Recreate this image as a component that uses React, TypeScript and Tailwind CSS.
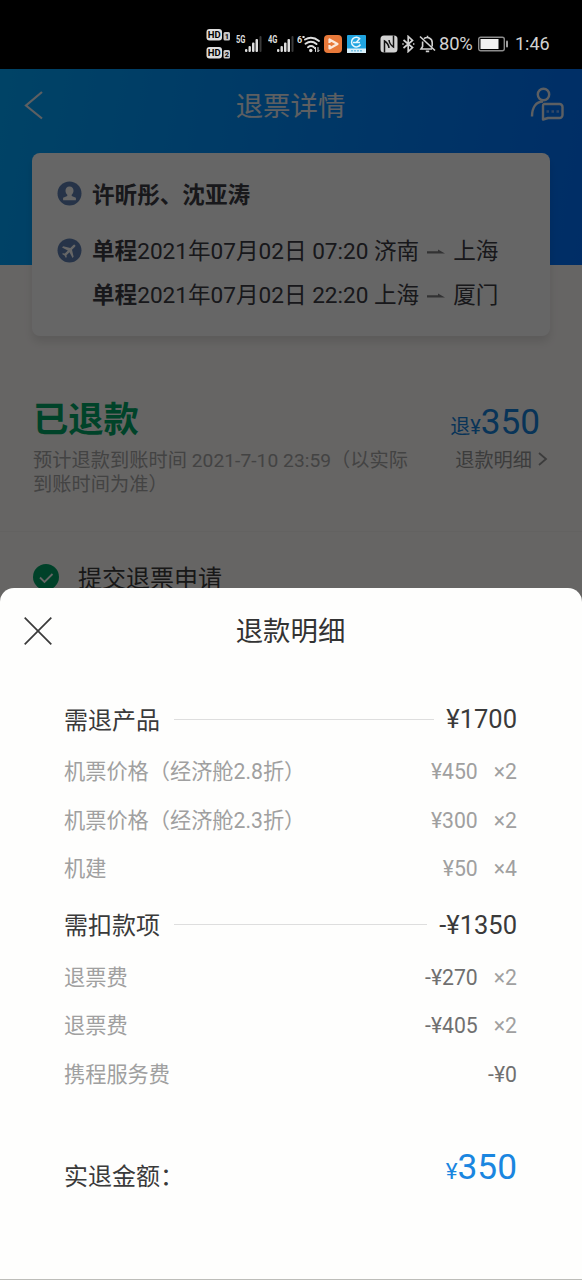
import React from "react";

interface FeeItem {
    label: string;
    price: string;
    count?: string;
}

interface FeeGroupProps {
    title: string;
    total: string;
    items: FeeItem[];
    deduct?: boolean;
    className?: string;
}

const refundItems: FeeItem[] = [
    { label: "机票价格（经济舱2.8折）", price: "¥450", count: "×2" },
    { label: "机票价格（经济舱2.3折）", price: "¥300", count: "×2" },
    { label: "机建", price: "¥50", count: "×4" },
];

const deductItems: FeeItem[] = [
    { label: "退票费", price: "-¥270", count: "×2" },
    { label: "退票费", price: "-¥405", count: "×2" },
    { label: "携程服务费", price: "-¥0" },
];

const trips = [
    { date: "2021年07月02日 07:20", from: "济南", to: "上海" },
    { date: "2021年07月02日 22:20", from: "上海", to: "厦门" },
];

function HdBadge({ sim }: { sim: string }) {
    return (
        <svg width="26" height="14" viewBox="0 0 26 14">
            <rect x="0.5" y="1" width="15.5" height="11.5" rx="3" fill="#dedede" />
            <text x="8.2" y="10.4" fontSize="9.5" fontWeight="700" textAnchor="middle" fill="#000">HD</text>
            <rect x="17.5" y="4" width="6.5" height="8.5" rx="1.5" fill="#c8c8c8" />
            <text x="20.8" y="11" fontSize="7.5" fontWeight="700" textAnchor="middle" fill="#000">{sim}</text>
        </svg>
    );
}

function Signal({ label }: { label: string }) {
    return (
        <svg width="28" height="20" viewBox="0 0 28 20">
            <text x="0" y="9" fontSize="10" fontWeight="700" textLength="9.5" lengthAdjust="spacingAndGlyphs" fill="#dedede">{label}</text>
            <g fill="#dedede">
                <rect x="9" y="15" width="2.4" height="3" rx="1" />
                <rect x="12.5" y="12" width="2.4" height="6" rx="1" />
                <rect x="16" y="8.5" width="2.5" height="9.5" rx="1" />
                <rect x="19.5" y="5" width="2.5" height="13" rx="1" />
            </g>
            <rect x="23.5" y="2" width="2" height="16" rx="1" fill="#3a3a3a" />
        </svg>
    );
}

function WifiIcon() {
    return (
        <svg width="24" height="20" viewBox="0 0 24 20" fill="none" stroke="#dedede" strokeWidth="2" strokeLinecap="round">
            <text x="0" y="9" fontSize="9" fontWeight="700" fill="#dedede" stroke="none">6</text>
            <path d="M6.2 3h.6M8 5.5q7-4 14 1.5M8.5 9.7q5.7-4 11 .3M11 13.2q3-2.2 6 0" />
            <circle cx="13.8" cy="16.5" r="1.7" fill="#dedede" stroke="none" />
            <path d="M18.5 13.5v4M17.3 14.7l1.2-1.2M21 17.5v-4M21 17.5l1.3-1.3" strokeWidth="1" />
        </svg>
    );
}

function StatusBar() {
    return (
        <div className="flex h-[69px] items-center bg-black pt-[18px] pl-[206px] text-[#d2d2d2]">
            <div className="flex flex-col gap-1">
                <HdBadge sim="1" />
                <HdBadge sim="2" />
            </div>
            <div className="ml-1 flex items-center">
                <Signal label="5G" />
                <div className="ml-1 flex"><Signal label="4G" /></div>
                <div className="ml-px flex"><WifiIcon /></div>
            </div>
            <svg className="ml-[3px]" width="18" height="18" viewBox="0 0 18 18">
                <rect width="18" height="18" rx="4" fill="#e8793a" />
                <path d="M5.5 4.5v9l8-4.5z" fill="none" stroke="#fbe8dc" strokeWidth="2.2" strokeLinejoin="round" />
                <path d="M3 9h5" stroke="#e8793a" strokeWidth="2" />
            </svg>
            <svg className="ml-[5px]" width="19" height="18" viewBox="0 0 19 18">
                <rect width="19" height="18" rx="1" fill="#20a4e0" />
                <path d="M6 7.5h7M13.2 4.2A4.8 4.8 0 1 0 13.5 9.5M9.5 7.2L13 3" fill="none" stroke="#e6f6fd" strokeWidth="1.5" />
                <rect y="13.5" width="19" height="4.5" fill="#d9f0fb" />
                <path d="M4 15.7h11" stroke="#79c4e6" strokeWidth="1.4" strokeDasharray="2 1" />
            </svg>
            <svg className="ml-[14px]" width="18" height="18" viewBox="0 0 18 18">
                <rect x="0.5" y="0.5" width="17" height="17" rx="3.5" fill="#d2d2d2" />
                <path d="M4.5 17.5V6q4 2.500 4.500 7M13.5 .5V12Q9.500 9.500 9 5" fill="none" stroke="#111" strokeWidth="1.5" />
            </svg>
            <svg className="ml-1" width="13" height="18" viewBox="0 0 13 18" fill="none" stroke="currentColor" strokeWidth="1.7">
                <path d="M1.5 5l9 7.5-4.3 4V1.5l4.3 4-9 7.5" />
                <path d="M0.3 9h1.4M11 9h1.4" />
            </svg>
            <svg className="ml-1" width="17" height="18" viewBox="0 0 17 18" fill="none" stroke="currentColor" strokeWidth="1.6">
                <path d="M1 1.5l15 14M5 3.7A5 5 0 0 1 13.2 7.5v4M3.6 6.5v5L2 14h11M6.8 16.4h3.4M8.5 2.3V.8" />
            </svg>
            <span className="ml-[3px] w-[36px] text-[18.4px] tracking-[-0.2px]">80%</span>
            <svg className="ml-[3px] shrink-0" width="31" height="16" viewBox="0 0 31 16">
                <rect x="0.7" y="1.2" width="25.6" height="13.6" rx="2" fill="none" stroke="#8c8c8c" strokeWidth="1.4" />
                <rect x="2.5" y="3" width="18" height="10" fill="#f0f0f0" />
                <rect x="28" y="4.5" width="2" height="7" rx="1" fill="#a0a0a0" />
            </svg>
            <span className="ml-[6px] text-[18px]">1:46</span>
        </div>
    );
}

function HalfArrow() {
    return (
        <svg className="mx-2" width="18" height="10" viewBox="0 0 18 10">
            <path d="M0 4.2h11V2.6l7 4H0z" fill="#7d7d80" />
        </svg>
    );
}

function TripCard() {
    return (
        <div className="mx-8 h-[183px] rounded-lg bg-white pt-[25px] pl-[25px] text-[22.6px] leading-[34px] text-[#3c3c44] shadow-[0_6px_8px_rgba(0,0,0,0.1)]">
            <div className="flex items-center">
                <svg className="-mt-1" width="25" height="25" viewBox="0 0 25 25">
                    <circle cx="12.5" cy="12.5" r="12" fill="#5f80b4" />
                    <path d="M12.5 5.5c-2.6 0-4 1.8-4 4.2 0 1.8.8 3 1.8 4v1.2l-4.2 1.8v2.5h12.8v-2.5l-4.2-1.8v-1.2c1-1 1.8-2.2 1.8-4 0-2.4-1.4-4.2-4-4.2z" fill="#fff" />
                </svg>
                <span className="ml-2.5 pt-px font-bold">许昕彤、沈亚涛</span>
            </div>
            <div className="mt-[22px] flex">
                <svg className="mt-[3px] shrink-0" width="25" height="25" viewBox="0 0 25 25">
                    <circle cx="12.5" cy="12.5" r="12" fill="#5f80b4" />
                    <path transform="translate(12.5 12.5) rotate(45) scale(.78) translate(-11.5 -12)" d="M21 16v-2l-8-5V3.5a1.5 1.5 0 0 0-3 0V9l-8 5v2l8-2.5V19l-2 1.5V22l3.5-1 3.5 1v-1.5L13 19v-5.5z" fill="#fff" />
                </svg>
                <div className="ml-2.5 flex flex-col gap-2.5">
                    {trips.map((trip) => (
                        <div key={trip.date} className="flex items-center whitespace-pre">
                            <span className="font-bold">单程</span>
                            <span>{trip.date} {trip.from}</span>
                            <HalfArrow />
                            <span>{trip.to}</span>
                        </div>
                    ))}
                </div>
            </div>
        </div>
    );
}

function RefundPage() {
    return (
        <div className="h-[1211px] bg-[#fffcfa]">
            <div className="h-[196px] bg-linear-[100deg] from-[#00a8ff] via-[#008cff] to-[#0072ff]">
                <div className="grid h-[84px] grid-cols-[1fr_auto_1fr] items-center pr-[18px] pb-3 pl-6">
                    <svg width="20" height="30" viewBox="0 0 20 30" fill="none" stroke="#e8eef5" strokeWidth="2.2">
                        <path d="M18 2L2 15.5 18 28.5" />
                    </svg>
                    <h1 className="pt-1.5 pr-[7px] text-[27.4px] text-[#e8eef5]">退票详情</h1>
                    <svg className="justify-self-end" width="34" height="36" viewBox="0 0 34 36" fill="none" stroke="#e8eef5" strokeWidth="2.4">
                        <circle cx="13.5" cy="7.5" r="5.7" />
                        <path d="M2 29.5C2 20.5 6 14.5 13 14.5" />
                        <path d="M14 17h15.5a3 3 0 0 1 3 3v8a3 3 0 0 1-3 3H18l-5 1.5V19a2 2 0 0 1 1-2z" strokeLinejoin="round" />
                        <path d="M16.5 24.5h2.5M21.5 24.5h2.5M26.5 24.5h2.5" stroke="#7fb4ff" />
                    </svg>
                </div>
                <TripCard />
            </div>
            <div className="flex h-[267px] justify-between border-b border-[#f8f5f3] pt-[133px] pr-[34px] pl-[33px]">
                <div className="w-[385px]">
                    <h2 className="text-[35.3px] leading-[44px] font-bold text-[#00a868]">已退款</h2>
                    <p className="mt-[7px] text-[19.2px] leading-6 tracking-[0.05px] text-[#a8a8a8]">
                        预计退款到账时间 2021-7-10 23:59（以实际
                        <br />
                        到账时间为准）
                    </p>
                </div>
                <div className="flex flex-col items-end whitespace-nowrap">
                    <div className="mr-2 flex items-baseline leading-[48px] text-[#1482dc]">
                        <span className="text-[20px]">退¥</span>
                        <span className="text-[35.2px]">350</span>
                    </div>
                    <div className="-mt-[2px] flex items-center gap-1.5 text-[19.2px] leading-6 text-[#969696]">
                        退款明细
                        <svg className="-mt-1" width="10" height="14" viewBox="0 0 10 14" fill="none" stroke="currentColor" strokeWidth="1.8">
                            <path d="M1 1l7 6-7 6" />
                        </svg>
                    </div>
                </div>
            </div>
            <div className="flex items-center gap-[19px] pt-[25px] pl-[33px]">
                <svg width="26" height="26" viewBox="0 0 26 26">
                    <circle cx="13" cy="13" r="13" fill="#00a468" />
                    <path d="M7 13.5l4.5 4.5 8-8" fill="none" stroke="#fff" strokeWidth="1.8" />
                </svg>
                <span className="pt-1 text-[24px] text-[#3c3c3c]">提交退票申请</span>
            </div>
        </div>
    );
}

function FeeGroup({ title, total, items, deduct, className = "" }: FeeGroupProps) {
    return (
        <section className={className}>
            <div className="flex h-14 items-center text-[24px] text-[#3a3a3a]">
                <h3 className="pt-[3px]">{title}</h3>
                <div className="mr-3 ml-[14px] h-px flex-1 bg-[#dedede]" />
                <span className="pt-px text-[25.5px]">{total}</span>
            </div>
            {items.map((item, i) => (
                <div key={i} className="flex h-[48.3px] items-center pt-[2px] text-[21.2px] text-[#a0a0a0]">
                    <span className="flex-1">{item.label}</span>
                    <span className={deduct ? "text-[#707070]" : ""}>{item.price}</span>
                    {item.count && <span className="ml-4">{item.count}</span>}
                </div>
            ))}
        </section>
    );
}

function RefundSheet() {
    return (
        <div className="h-[692px] rounded-t-[14px] border-b border-[#bdbdb9] bg-[#fefefd]">
            <div className="grid h-[103px] grid-cols-[1fr_auto_1fr] items-center px-6 pb-[18px]">
                <svg width="28" height="28" viewBox="0 0 28 28" stroke="#3a3a3a" strokeWidth="1.7">
                    <path d="M0.7 0.7l26.6 26.6M27.3 0.7L0.7 27.3" />
                </svg>
                <h2 className="pt-1 pr-px text-[27.4px] text-[#333]">退款明细</h2>
            </div>
            <div className="pr-[65px] pl-16">
                <FeeGroup title="需退产品" total="¥1700" items={refundItems} />
                <FeeGroup title="需扣款项" total="-¥1350" items={deductItems} deduct className="mt-[5px]" />
                <div className="mt-[43px] flex items-start justify-between">
                    <span className="pt-[18px] text-[24px] text-[#3a3a3a]">实退金额：</span>
                    <div className="text-[#1a86e0]">
                        <span className="text-[22.5px]">¥</span>
                        <span className="text-[35.3px]">350</span>
                    </div>
                </div>
            </div>
        </div>
    );
}

export default function App() {
    return (
        <div className="relative h-[1280px] w-[582px] overflow-hidden font-[Roboto,'Noto_Sans_CJK_SC',sans-serif]">
            <StatusBar />
            <RefundPage />
            <div className="absolute inset-x-0 top-[69px] bottom-0 flex flex-col justify-end bg-black/60">
                <RefundSheet />
            </div>
        </div>
    );
}
